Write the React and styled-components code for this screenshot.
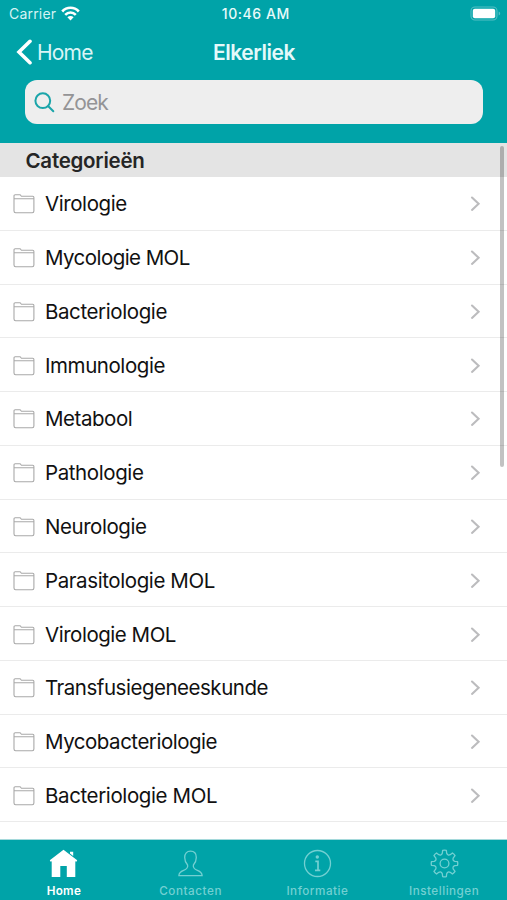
import React from 'react';
import styled, { createGlobalStyle } from 'styled-components';

const teal = '#00a3a8';

const GlobalStyle = createGlobalStyle`
  * { box-sizing: border-box; }
  body { margin: 0; background: #fff; font-family: Inter, "Liberation Sans", sans-serif; }
`;

const Screen = styled.div`
  position: relative;
  display: flex;
  flex-direction: column;
  width: 507px;
  height: 900px;
  overflow: hidden;
  background: #fff;
`;

const Header = styled.header`
  flex: none;
  height: 143px;
  background: ${teal};
  color: #fff;
`;

const StatusBar = styled.div`
  display: grid;
  grid-template-columns: 1fr auto 1fr;
  align-items: center;
  height: 27px;
  padding: 0 6px 0 9px;
`;

const Carrier = styled.div`
  display: flex;
  align-items: center;
  gap: 5px;
  font-size: 14px;
  line-height: 20px;
  letter-spacing: 0.2px;
  color: #d5f3f4;
`;

const Clock = styled.div`
  margin-right: -1.5px;
  font-size: 14px;
  line-height: 20px;
  font-weight: 500;
  letter-spacing: 0.55px;
  color: #e9fafa;
`;

const BatteryIcon = styled.svg`
  display: block;
  justify-self: end;
`;

const NavBar = styled.nav`
  display: grid;
  grid-template-columns: 1fr auto 1fr;
  align-items: center;
  height: 50px;
  padding: 0 15px 0 16px;
`;

const BackLink = styled.div`
  display: flex;
  align-items: center;
  gap: 4px;
  font-size: 21px;
  letter-spacing: -0.8px;
  color: #d9f5f6;
`;

const Title = styled.h1`
  margin: 0;
  font-size: 21px;
  font-weight: 600;
  letter-spacing: -0.45px;
  color: #e4f9fa;
`;

const SearchField = styled.div`
  display: flex;
  align-items: center;
  gap: 7px;
  height: 44px;
  margin: 3px 24.5px 0 25px;
  padding-left: 9px;
  border-radius: 12px;
  background: #eee;
  color: #949496;
  font-size: 21px;
  letter-spacing: -0.9px;
`;

const SectionHeader = styled.h2`
  flex: none;
  height: 34px;
  margin: 0;
  padding-left: 25.5px;
  background: #e4e4e4;
  color: #252525;
  font-size: 20.5px;
  font-weight: 600;
  line-height: 36px;
  letter-spacing: -0.25px;
`;

const List = styled.ul`
  flex: 1;
  min-height: 0;
  margin: 0;
  padding: 0;
  overflow: hidden;
  list-style: none;
`;

const Row = styled.li`
  display: flex;
  align-items: center;
  height: 53.77px;
  padding: 2px 26px 0 13px;
  border-bottom: 1px solid #ebebeb;

  &:last-child { padding-top: 0; }
`;

const RowLabel = styled.span`
  flex: 1;
  margin-left: 10px;
  font-size: 20.5px;
  line-height: 26px;
  letter-spacing: ${(p) => p.$tracking}px;
  color: #111;
  white-space: nowrap;
`;

const ScrollThumb = styled.div`
  position: absolute;
  top: 146px;
  right: 3.5px;
  width: 4px;
  height: 321px;
  border-radius: 2px;
  background: rgba(0, 0, 0, 0.24);
`;

const TabBar = styled.footer`
  flex: none;
  display: grid;
  grid-template-columns: repeat(4, 1fr);
  height: 61px;
  border-top: 1px solid #a5d9db;
  background: ${teal};
`;

const Tab = styled.div`
  display: flex;
  flex-direction: column;
  align-items: center;
  padding: 9px 0 0 1px;
  color: ${(p) => (p.$active ? '#fff' : '#73d0d2')};
`;

const TabLabel = styled.span`
  margin-top: 5px;
  font-family: Inter, sans-serif;
  font-size: 11.7px;
  font-weight: ${(p) => (p.$active ? 600 : 500)};
  line-height: 16px;
  letter-spacing: ${(p) => p.$tracking}px;
`;

const Glyph = styled.svg`
  display: block;
  flex: none;
`;

const WifiIcon = () => (
  <Glyph width="19" height="15" viewBox="0 0 19 15" fill="none" stroke="#fff" strokeWidth="2.6">
    <path d="M1.2 5.5C5.8.5 13.2.5 17.8 5.5M4.2 8.8c3-3.1 7.6-3.1 10.6 0" />
    <path d="M6.4 11.3c1.8-1.7 4.4-1.7 6.2 0L9.5 14.5z" fill="#fff" stroke="none" />
  </Glyph>
);

const Battery = () => (
  <BatteryIcon width="31" height="15" viewBox="0 0 31 15">
    <rect x="1" y="1" width="26" height="13" rx="4" fill="none" stroke="#55bfc4" strokeWidth="1.1" />
    <rect x="2.8" y="2.8" width="22.4" height="9.4" rx="2" fill="#fff" />
    <path d="M28.7 5.5c2 .7 2 3.3 0 4z" fill="#55bfc4" />
  </BatteryIcon>
);

const FolderIcon = () => (
  <Glyph width="22" height="20" viewBox="0 0 22 20" fill="none" stroke="#a9a9a9" strokeWidth="1.1" strokeLinejoin="round">
    <path d="M1 4.8V2Q1 .8 2.200.8h4.500Q7.600.8 8 1.700l.4.6h11.300q1.200 0 1.200 1.300V17q0 1.700-1.600 1.700H2.600Q1 18.700 1 17V4.800H20.900" />
  </Glyph>
);

const Chevron = () => (
  <Glyph width="11" height="16" viewBox="0 0 11 16" fill="none" stroke="#bcbcbe" strokeWidth="2.1" strokeLinecap="round">
    <path d="M2 1.500 8.600 7.700 2 13.900" />
  </Glyph>
);

// Outline of an eight-toothed gear centred on (cx, cy).
const gearPath = (cx, cy, outer, inner) => {
  const point = (angle, radius) => {
    const a = ((angle - 90) * Math.PI) / 180;
    return `${(cx + radius * Math.cos(a)).toFixed(2)} ${(cy + radius * Math.sin(a)).toFixed(2)}`;
  };
  let d = `M${point(-8, outer)}`;
  for (let i = 0; i < 8; i += 1) {
    const a = i * 45;
    d += `Q${point(a, outer + 0.3)} ${point(a + 8, outer)}`;
    d += `L${point(a + 12, inner + 0.9)}`;
    d += `Q${point(a + 22.5, inner - 1.3)} ${point(a + 33, inner + 0.9)}`;
    d += `L${point(a + 37, outer)}`;
  }
  return `${d}Z`;
};

const tabs = [
  {
    label: 'Home', active: true, tracking: 0.3,
    icon: (
      <>
        <path d="M14 .8.3 11.300l.8 1.500 1.100-.6V28h8.600V17h6.500v11h8.500V12.200l1.100.6.8-1.500z" fill="currentColor" stroke="none" />
        <path d="M20.500 2.700h3.200v4.200l-3.200-2.300z" fill="currentColor" stroke="none" />
      </>
    ),
  },
  {
    label: 'Contacten', tracking: 0.55,
    icon: <path d="M14 2.200c-3.700 0-5.800 2.300-5.800 6.200 0 3.500 1.200 5.700 2.900 7.600.6 3-1 4.200-4 5.300-3.500 1.300-4.700 2.600-4.700 5.300h23.200c0-2.700-1.200-4-4.700-5.300-3-1.100-4.600-2.300-4-5.300 1.700-1.900 2.900-4.100 2.900-7.600 0-3.900-2.100-6.200-5.800-6.200z" />,
  },
  {
    label: 'Informatie', tracking: 0.5,
    icon: (
      <>
        <circle cx="14" cy="14.500" r="13" />
        <circle cx="13.800" cy="8" r="1.700" fill="currentColor" stroke="none" />
        <path d="M11.800 12.300h2.700v8.900M11.500 21.400h5.300" strokeWidth="1.700" />
      </>
    ),
  },
  {
    label: 'Instellingen', tracking: 0.5,
    icon: (
      <>
        <circle cx="14" cy="14.500" r="4.400" />
        <path d={gearPath(14, 14.5, 13.2, 9.6)} strokeLinejoin="round" />
      </>
    ),
  },
];

const categories = [
  ['Virologie', -0.42],
  ['Mycologie MOL', -0.56],
  ['Bacteriologie', -0.4],
  ['Immunologie', -0.43],
  ['Metabool', -0.45],
  ['Pathologie', -0.4],
  ['Neurologie', -0.45],
  ['Parasitologie MOL', -0.4],
  ['Virologie MOL', -0.47],
  ['Transfusiegeneeskunde', -0.48],
  ['Mycobacteriologie', -0.48],
  ['Bacteriologie MOL', -0.38],
];

export default function App() {
  return (
    <>
      <GlobalStyle />
      <Screen>
        <Header>
          <StatusBar>
            <Carrier>Carrier <WifiIcon /></Carrier>
            <Clock>10:46 AM</Clock>
            <Battery />
          </StatusBar>
          <NavBar>
            <BackLink>
              <Glyph width="17" height="26" viewBox="0 0 17 26" fill="none" stroke="#fff" strokeWidth="3.6" strokeLinecap="round">
                <path d="M14 2.300 3 13l11 10.700" />
              </Glyph>
              Home
            </BackLink>
            <Title>Elkerliek</Title>
          </NavBar>
          <SearchField>
            <Glyph width="21" height="21" viewBox="0 0 21 21" fill="none" stroke="#1ba5aa" strokeWidth="2" strokeLinecap="round">
              <circle cx="8.8" cy="8.7" r="7.4" />
              <path d="m14.300 14.300 5 5" />
            </Glyph>
            Zoek
          </SearchField>
        </Header>
        <SectionHeader>Categorieën</SectionHeader>
        <List>
          {categories.map(([name, tracking]) => (
            <Row key={name}>
              <FolderIcon />
              <RowLabel $tracking={tracking}>{name}</RowLabel>
              <Chevron />
            </Row>
          ))}
          <Row><FolderIcon /></Row>
        </List>
        <TabBar>
          {tabs.map((t) => (
            <Tab key={t.label} $active={t.active}>
              <Glyph width="29" height="29" viewBox="0 0 28 29" fill="none" stroke="currentColor" strokeWidth="1.3">{t.icon}</Glyph>
              <TabLabel $active={t.active} $tracking={t.tracking}>{t.label}</TabLabel>
            </Tab>
          ))}
        </TabBar>
        <ScrollThumb />
      </Screen>
    </>
  );
}
